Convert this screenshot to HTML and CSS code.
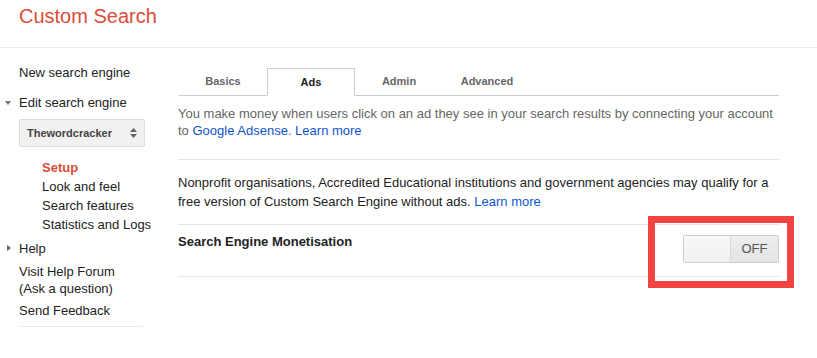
FILE: index.html
```html
<!DOCTYPE html>
<html>
<head>
<meta charset="utf-8">
<link rel="stylesheet" href="styles.css">
</head>
<body>
<header class="header">
  <h1 class="logo">Custom Search</h1>
</header>
<div class="main">
  <nav class="sidebar">
    <div class="nav-item first">New search engine</div>
    <div class="nav-item expand"><span class="tri-down"></span>Edit search engine</div>
    <div class="select">
      <span class="select-text">Thewordcracker</span>
      <svg class="select-arrows" width="7" height="10" viewBox="0 0 7 10"><path d="M3.5 0 L7 4 H0 Z M0 6 H7 L3.5 10 Z" fill="#666"/></svg>
    </div>
    <ul class="subnav">
      <li class="sub active">Setup</li>
      <li class="sub">Look and feel</li>
      <li class="sub">Search features</li>
      <li class="sub">Statistics and Logs</li>
    </ul>
    <div class="nav-item help"><span class="tri-right"></span>Help</div>
    <div class="nav-item forum">Visit Help Forum<br>(Ask a question)</div>
    <div class="nav-item feedback">Send Feedback</div>
    <div class="nav-divider"></div>
  </nav>
  <section class="content">
    <div class="tabs">
      <div class="tab">Basics</div>
      <div class="tab selected">Ads</div>
      <div class="tab">Admin</div>
      <div class="tab">Advanced</div>
    </div>
    <div class="section intro">
      <p class="muted">You make money when users click on an ad they see in your search results by connecting your account to <a class="link" href="#">Google Adsense</a>. <a class="link" href="#">Learn more</a></p>
    </div>
    <div class="section nonprofit">
      <p class="body">Nonprofit organisations, Accredited Educational institutions and government agencies may qualify for a free version of Custom Search Engine without ads. <a class="link" href="#">Learn more</a></p>
    </div>
    <div class="section setting">
      <div class="setting-label">Search Engine Monetisation</div>
      <div class="toggle">
        <span class="toggle-knob"></span>
        <span class="toggle-off">OFF</span>
      </div>
    </div>
  </section>
</div>
<div class="highlight"></div>
</body>
</html>
```

FILE: styles.css
```css
* { box-sizing: border-box; }
html, body { margin: 0; padding: 0; background: #fff; }
body {
  font-family: "Liberation Sans", Arial, sans-serif;
  font-size: 13px;
  color: #222;
  position: relative;
  width: 817px;
  height: 358px;
  overflow: hidden;
}
.header {
  height: 48px;
  padding: 5px 0 0 19px;
  border-bottom: 1px solid #ebebeb;
}
.logo {
  margin: 0;
  font-size: 20px;
  font-weight: normal;
  line-height: 23px;
  color: #dd4b39;
}
.main { display: flex; }
.sidebar {
  width: 178px;
  flex: none;
  padding: 15px 0 0 19px;
}
.nav-item { line-height: 19px; position: relative; color: #222; }
.expand { margin-top: 11px; }
.tri-down {
  position: absolute;
  left: -14px;
  top: 8px;
  width: 0; height: 0;
  border-left: 3.5px solid transparent;
  border-right: 3.5px solid transparent;
  border-top: 4px solid #777;
}
.tri-right {
  position: absolute;
  left: -12px;
  top: 6px;
  width: 0; height: 0;
  border-top: 3.5px solid transparent;
  border-bottom: 3.5px solid transparent;
  border-left: 4px solid #666;
}
.select {
  margin-top: 7px;
  width: 126px;
  height: 28px;
  background: #f1f1f1;
  border: 1px solid #dcdcdc;
  border-radius: 2px;
  display: flex;
  align-items: center;
  justify-content: space-between;
  padding: 0 7px 0 7px;
}
.select-text { font-size: 11px; font-weight: bold; color: #444; }
.select-arrows { display: block; }
.subnav { list-style: none; margin: 11px 0 0 0; padding: 0 0 0 23px; }
.sub { line-height: 19px; color: #222; }
.sub.active { color: #dd4b39; font-weight: bold; }
.help { margin-top: 5px; }
.forum { margin-top: 5px; line-height: 17px; }
.feedback { margin-top: 4px; }
.nav-divider {
  margin-top: 6px;
  width: 124px;
  height: 1px;
  background: #ebebeb;
}
.content { width: 601px; flex: none; padding-top: 20px; }
.tabs {
  display: flex;
  height: 28px;
  border-bottom: 1px solid #ccc;
  margin-left: 1px;
}
.tab {
  width: 88px;
  height: 28px;
  line-height: 27px;
  text-align: center;
  font-size: 11px;
  font-weight: bold;
  color: #666;
}
.tab.selected {
  color: #222;
  background: #fff;
  border: 1px solid #ccc;
  border-bottom-color: #fff;
  line-height: 26px;
}
.section { border-bottom: 1px solid #e5e5e5; }
.intro { padding: 9px 0 20px; }
.nonprofit { padding: 13px 0 13px; }
p { margin: 0; }
.muted { color: #666; line-height: 17px; }
.body { color: #222; line-height: 19px; }
.link { color: #15c; text-decoration: none; }
.setting {
  display: flex;
  justify-content: space-between;
  align-items: flex-start;
  padding: 7px 0 13px;
}
.setting-label { font-weight: bold; line-height: 19px; color: #222; }
.toggle {
  margin-top: 3px;
  width: 96px;
  height: 28px;
  border: 1px solid #ccc;
  border-radius: 2px;
  display: flex;
  overflow: hidden;
}
.toggle-knob {
  width: 47px;
  background: linear-gradient(#f8f8f8, #f1f1f1);
  border-right: 1px solid #d9d9d9;
}
.toggle-off {
  flex: 1;
  background: linear-gradient(#eeeeee, #e4e4e4);
  color: #555;
  font-size: 13px;
  text-align: center;
  line-height: 26px;
}
.highlight {
  position: absolute;
  left: 648px;
  top: 216px;
  width: 146px;
  height: 72px;
  border: 7px solid #f34444;
}
```
